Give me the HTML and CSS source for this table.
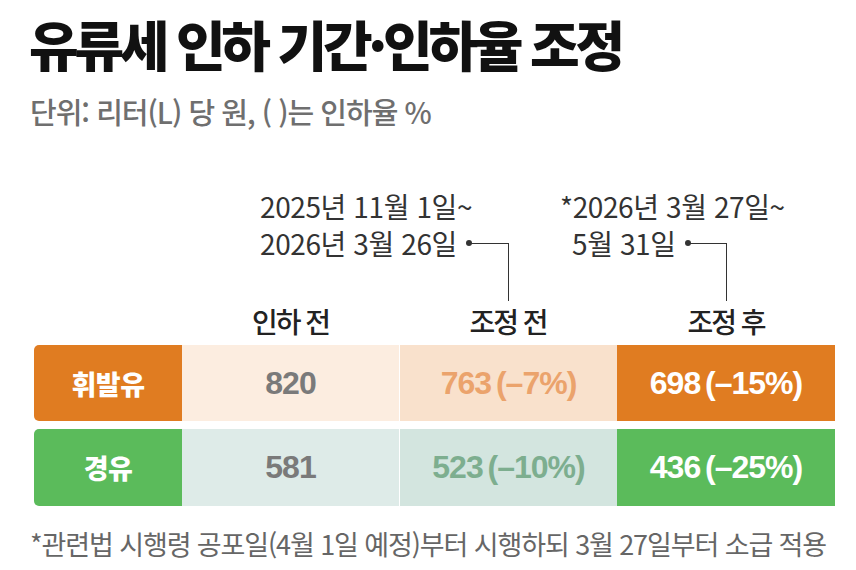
FILE: index.html
```html
<!DOCTYPE html>
<html lang="ko">
<head>
<meta charset="utf-8">
<link rel="stylesheet" href="styles.css">
</head>
<body>
<div class="page">
  <h1 class="title">유류세 인하 기간·인하율 조정</h1>
  <p class="unit">단위: 리터(L) 당 원, ( )는 인하율 %</p>

  <div class="notes">
    <div class="note note-before">
      <div class="note-line">2025년 11월 1일~</div>
      <div class="note-line note-last"><span>2026년 3월 26일</span><span class="lead"></span></div>
    </div>
    <div class="note note-after">
      <div class="note-line">*2026년 3월 27일~</div>
      <div class="note-line note-last indent"><span>5월 31일</span><span class="lead"></span></div>
    </div>
  </div>

  <div class="grid heads">
    <div></div>
    <div class="head">인하 전</div>
    <div class="head">조정 전</div>
    <div class="head">조정 후</div>
  </div>

  <div class="grid row row-gasoline">
    <div class="cell label">휘발유</div>
    <div class="cell num base">820</div>
    <div class="cell num mid">763 (–7%)</div>
    <div class="cell num now">698 (–15%)</div>
  </div>
  <div class="grid row row-diesel">
    <div class="cell label">경유</div>
    <div class="cell num base">581</div>
    <div class="cell num mid">523 (–10%)</div>
    <div class="cell num now">436 (–25%)</div>
  </div>

  <p class="foot">*관련법 시행령 공포일(4월 1일 예정)부터 시행하되 3월 27일부터 소급 적용</p>
</div>
</body>
</html>
```

FILE: styles.css
```css
* { box-sizing: border-box; }
html, body { margin: 0; padding: 0; background: #fff; }
body {
  font-family: "Noto Sans CJK KR", "Noto Sans", sans-serif;
  color: #222;
}
.page {
  width: 856px;
  height: 570px;
  padding: 14px 0 0 0;
  overflow: hidden;
}
.title {
  margin: 0 0 0 29px;
  font-size: 54px;
  line-height: 60px;
  font-weight: 900;
  letter-spacing: -4.3px;
  color: #111;
  white-space: nowrap;
}
.unit {
  margin: 20px 0 0 30px;
  font-size: 29px;
  line-height: 34px;
  font-weight: 500;
  letter-spacing: -1px;
  color: #6f6f6f;
  white-space: nowrap;
}
.notes {
  display: flex;
  margin-top: 60px;
  height: 115px;
  padding-left: 260px;
}
.note {
  display: flex;
  flex-direction: column;
}
.note-before { width: 249px; }
.note-after { width: 167px; margin-left: 51px; }
.note-line {
  font-size: 28px;
  line-height: 37px;
  letter-spacing: -0.4px;
  color: #333;
  white-space: nowrap;
}
.note-last {
  display: flex;
  align-items: center;
}
.indent { padding-left: 12px; }
.lead {
  position: relative;
  flex: 1;
  height: 0;
  margin-left: 12px;
  border-top: 1.5px solid #333;
}
.lead::before {
  content: "";
  position: absolute;
  left: -3px;
  top: -3.75px;
  width: 6px;
  height: 6px;
  border-radius: 50%;
  background: #333;
}
.lead::after {
  content: "";
  position: absolute;
  right: 0;
  top: -1.5px;
  width: 1.5px;
  height: 58px;
  background: #333;
}
.grid {
  display: grid;
  grid-template-columns: 148px 217px 218px 218px;
  margin-left: 34px;
  width: 801px;
}
.heads {
  height: 42px;
}
.head {
  text-align: center;
  font-size: 28px;
  line-height: 36px;
  font-weight: 500;
  letter-spacing: -2px;
  color: #222;
}
.row {
  height: 76px;
}
.row-diesel {
  margin-top: 8px;
  height: 77px;
}
.cell {
  display: flex;
  align-items: center;
  justify-content: center;
}
.label {
  border-radius: 5px 0 0 5px;
  color: #fff;
  font-size: 27px;
  font-weight: 900;
  letter-spacing: -0.5px;
}
.num {
  font-family: "Liberation Sans", Arial, sans-serif;
  font-size: 32px;
  font-weight: 700;
  letter-spacing: -1px;
  word-spacing: -3px;
}
.mid { border-left: 1px solid #fff; }
.base { color: #7a7a7a; }
.now { color: #fff; }

.row-gasoline .label { background: #E07C21; }
.row-gasoline .base { background: #FCEDE0; }
.row-gasoline .mid { background: #F9E1CC; color: #EBA36C; }
.row-gasoline .now { background: #E07C21; }

.row-diesel .label { background: #5BBB5B; }
.row-diesel .base { background: #DEEBE8; }
.row-diesel .mid { background: #D3E5DF; color: #7DAE8F; }
.row-diesel .now { background: #5BBB5B; }

.foot {
  margin: 21px 0 0 30px;
  font-size: 27px;
  line-height: 34px;
  letter-spacing: -1.1px;
  color: #666;
  white-space: nowrap;
}
```
